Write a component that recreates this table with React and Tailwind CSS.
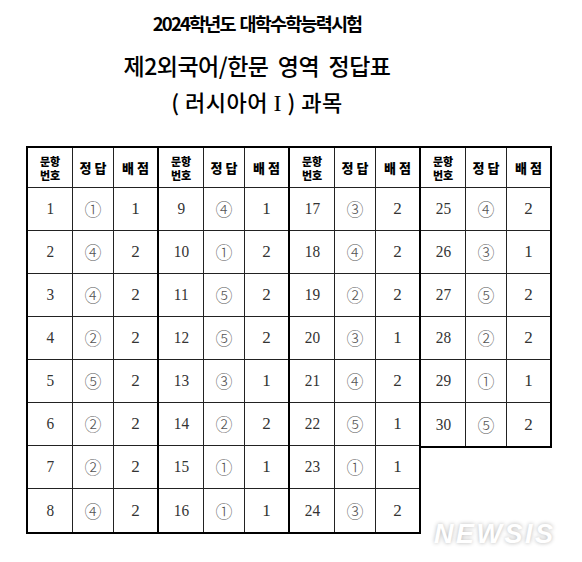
import React from "react";

const data = [
  ["1", "①", "1"], ["2", "④", "2"], ["3", "④", "2"], ["4", "②", "2"],
  ["5", "⑤", "2"], ["6", "②", "2"], ["7", "②", "2"], ["8", "④", "2"],
  ["9", "④", "1"], ["10", "①", "2"], ["11", "⑤", "2"], ["12", "⑤", "2"],
  ["13", "③", "1"], ["14", "②", "2"], ["15", "①", "1"], ["16", "①", "1"],
  ["17", "③", "2"], ["18", "④", "2"], ["19", "②", "2"], ["20", "③", "1"],
  ["21", "④", "2"], ["22", "⑤", "1"], ["23", "①", "1"], ["24", "③", "2"],
  ["25", "④", "2"], ["26", "③", "1"], ["27", "⑤", "2"], ["28", "②", "2"],
  ["29", "①", "1"], ["30", "⑤", "2"],
];

const groups = [data.slice(0, 8), data.slice(8, 16), data.slice(16, 24), data.slice(24, 30)];

const headFont = { fontFamily: '"Noto Sans CJK KR", sans-serif' };

function Group({ rows, first }) {
  return (
    <div
      className={`flex flex-col self-start border-2 border-black ${first ? "" : "border-l-0"}`}
      style={{ width: first ? 133 : 131 }}
    >
      <div className="grid grid-cols-[45px_41px_1fr] h-[40px] border-b border-[#222]" style={headFont}>
        <div className="flex flex-col items-center justify-center text-[11px] leading-[14px] font-black text-black border-r border-[#222]">
          <span className="block">문항</span>
          <span className="block">번호</span>
        </div>
        <div className="flex items-center justify-center text-[13px] font-black text-black border-r border-[#222] whitespace-pre">
          정 답
        </div>
        <div className="flex items-center justify-center text-[13px] font-black text-black whitespace-pre">
          배 점
        </div>
      </div>
      {rows.map((r, i) => (
        <div
          key={r[0]}
          className={`grid grid-cols-[45px_41px_1fr] h-[43px] ${i < rows.length - 1 ? "border-b border-[#222]" : ""}`}
        >
          <div
            className="flex items-center justify-center text-[17px] text-[#333] border-r border-[#222]"
            style={{ fontFamily: '"Liberation Serif", serif' }}
          >
            <span className="scale-x-90 inline-block">{r[0]}</span>
          </div>
          <div
            className="flex items-center justify-center text-[17px] font-light text-[#555] border-r border-[#222]"
            style={{ fontFamily: '"Noto Sans CJK KR", serif' }}
          >
            {r[1]}
          </div>
          <div
            className="flex items-center justify-center text-[17px] text-[#333]"
            style={{ fontFamily: '"Liberation Serif", serif' }}
          >
            {r[2]}
          </div>
        </div>
      ))}
    </div>
  );
}

export default function App() {
  return (
    <div className="relative w-[582px] h-[562px] bg-white overflow-hidden">
      <div className="flex flex-col items-center pr-[68px] pt-[10px] text-black" style={headFont}>
        <div className="h-[26px] leading-[26px] text-[18.5px] font-bold tracking-[-1.8px] whitespace-pre">2024학년도  대학수학능력시험</div>
        <div className="mt-[12px] h-[34px] leading-[34px] text-[23px] font-medium tracking-[-0.5px] whitespace-pre">
          제2외국어/한문  영역  정답표
        </div>
        <div className="mt-[2px] h-[34px] leading-[34px] text-[22px] font-medium tracking-[0.5px] whitespace-pre">
          ( 러시아어 <span style={{ fontFamily: '"Liberation Serif", serif' }} className="text-[24px]">I</span> ) 과목
        </div>
      </div>
      <div className="flex mt-[28px] ml-[26px]">
        {groups.map((g, i) => (
          <Group key={i} rows={g} first={i === 0} />
        ))}
      </div>
      <div
        className="absolute left-[434px] top-[514px] text-[27px] font-black italic text-white tracking-[2.5px] [text-shadow:0_0_4px_rgba(0,0,0,0.3)]"
        style={{ fontFamily: '"Liberation Sans", sans-serif' }}
      >
        NEWSIS
      </div>
    </div>
  );
}
